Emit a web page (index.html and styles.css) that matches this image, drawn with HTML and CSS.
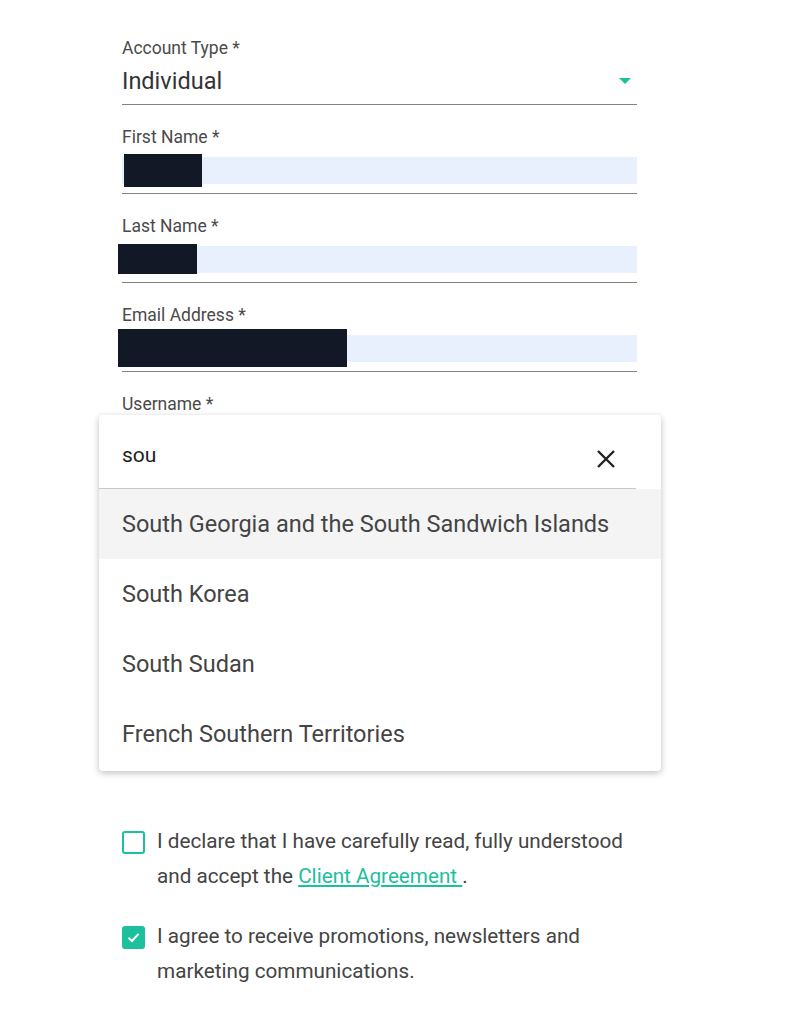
FILE: index.html
```html
<!DOCTYPE html>
<html lang="en">
<head>
    <meta charset="UTF-8">
    <meta name="viewport" content="width=device-width, initial-scale=1.0">
    <title>Open Account</title>
    <link rel="stylesheet" href="styles.css">
</head>
<body>
    <form class="signup-form">
        <div class="field field-select">
            <label class="field-label">Account Type *</label>
            <div class="field-control">
                <span class="select-value">Individual</span>
                <span class="select-arrow"></span>
            </div>
        </div>

        <div class="field">
            <label class="field-label">First Name *</label>
            <div class="field-control">
                <div class="autofill">
                    <span class="redacted redacted-first"></span>
                </div>
            </div>
        </div>

        <div class="field">
            <label class="field-label">Last Name *</label>
            <div class="field-control">
                <div class="autofill">
                    <span class="redacted redacted-last"></span>
                </div>
            </div>
        </div>

        <div class="field">
            <label class="field-label">Email Address *</label>
            <div class="field-control">
                <div class="autofill">
                    <span class="redacted redacted-email"></span>
                </div>
            </div>
        </div>

        <div class="field">
            <label class="field-label">Username *</label>
            <div class="field-control"></div>
        </div>

        <div class="field">
            <label class="field-label">Country of Residence *</label>
            <div class="field-control"></div>
        </div>

        <!-- open country picker -->
        <div class="picker">
            <div class="picker-search">
                <span class="picker-query">sou</span>
                <svg class="picker-clear" width="20" height="20" viewBox="0 0 20 20">
                    <path d="M2 2 L18 18 M18 2 L2 18" stroke="#222" stroke-width="2.4" fill="none"/>
                </svg>
            </div>
            <ul class="picker-list">
                <li class="picker-option active">South Georgia and the South Sandwich Islands</li>
                <li class="picker-option">South Korea</li>
                <li class="picker-option">South Sudan</li>
                <li class="picker-option">French Southern Territories</li>
            </ul>
        </div>

        <div class="agreements">
            <div class="agree-row">
                <span class="checkbox"></span>
                <p class="agree-text">I declare that I have carefully read, fully understood and accept the <a href="#">Client Agreement </a>.</p>
            </div>
            <div class="agree-row">
                <span class="checkbox checked">
                    <svg width="15" height="15" viewBox="0 0 15 15">
                        <path d="M2.5 7.8 L6 11 L12.5 3.8" stroke="#fff" stroke-width="2" fill="none"/>
                    </svg>
                </span>
                <p class="agree-text">I agree to receive promotions, newsletters and marketing communications.</p>
            </div>
        </div>
    </form>
</body>
</html>
```

FILE: styles.css
```css
body {
    margin: 0;
    background: #fff;
    font-family: Roboto, 'Liberation Sans', sans-serif;
    color: #333;
}

.signup-form {
    position: relative;
    width: 515px;
    margin-left: 122px;
    padding-top: 38px;
}

/* Fields */
.field {
    margin-bottom: 22px;
}

.field-label {
    display: block;
    font-size: 17.5px;
    line-height: 20px;
    color: #4a4a4a;
}

.field-control {
    display: flex;
    align-items: center;
    height: 46px;
    border-bottom: 1px solid #828282;
}

.select-value {
    flex: 1;
    font-size: 23.5px;
    color: #333;
}

.select-arrow {
    width: 0;
    height: 0;
    margin-right: 6px;
    border-left: 6.5px solid transparent;
    border-right: 6.5px solid transparent;
    border-top: 6px solid #1cc09c;
}

.autofill {
    display: flex;
    align-items: center;
    width: 100%;
    height: 27px;
    background: #e8f0fe;
}

.redacted {
    display: block;
    background: #121826;
}

.redacted-first {
    width: 78px;
    height: 33px;
    margin-left: 2px;
}

.redacted-last {
    width: 79px;
    height: 30px;
    margin-left: -4px;
}

.redacted-email {
    width: 229px;
    height: 38px;
    margin-left: -4px;
}

/* Country picker */
.picker {
    position: absolute;
    top: 415px;
    left: -23px;
    width: 562px;
    padding-bottom: 2px;
    background: #fff;
    border-radius: 4px;
    box-shadow: 0 2px 7px rgba(0, 0, 0, 0.25);
    z-index: 5;
}

.picker-search {
    display: flex;
    align-items: center;
    justify-content: space-between;
    width: 514px;
    height: 67px;
    padding: 6px 0 0 23px;
    border-bottom: 1px solid #c8c8c8;
}

.picker-query {
    font-size: 21px;
    color: #222;
}

.picker-clear {
    margin: 8px 20px 0 0;
}

.picker-list {
    list-style: none;
    margin: 0;
    padding: 0;
}

.picker-option {
    height: 70px;
    line-height: 70px;
    padding-left: 23px;
    font-size: 23.5px;
    color: #444;
}

.picker-option.active {
    background: #f4f4f4;
}

/* Agreements */
.agreements {
    margin-top: 274px;
}

.agree-row {
    display: flex;
    align-items: flex-start;
    margin-bottom: 25px;
}

.checkbox {
    flex-shrink: 0;
    display: flex;
    align-items: center;
    justify-content: center;
    width: 19px;
    height: 19px;
    margin-top: 7px;
    border: 2px solid #1cc09c;
    border-radius: 3px;
}

.checkbox.checked {
    background: #1cc09c;
}

.agree-text {
    margin: 0 0 0 12px;
    font-size: 20.7px;
    line-height: 35px;
    color: #444;
}

.agree-text a {
    color: #1cc09c;
}
```
